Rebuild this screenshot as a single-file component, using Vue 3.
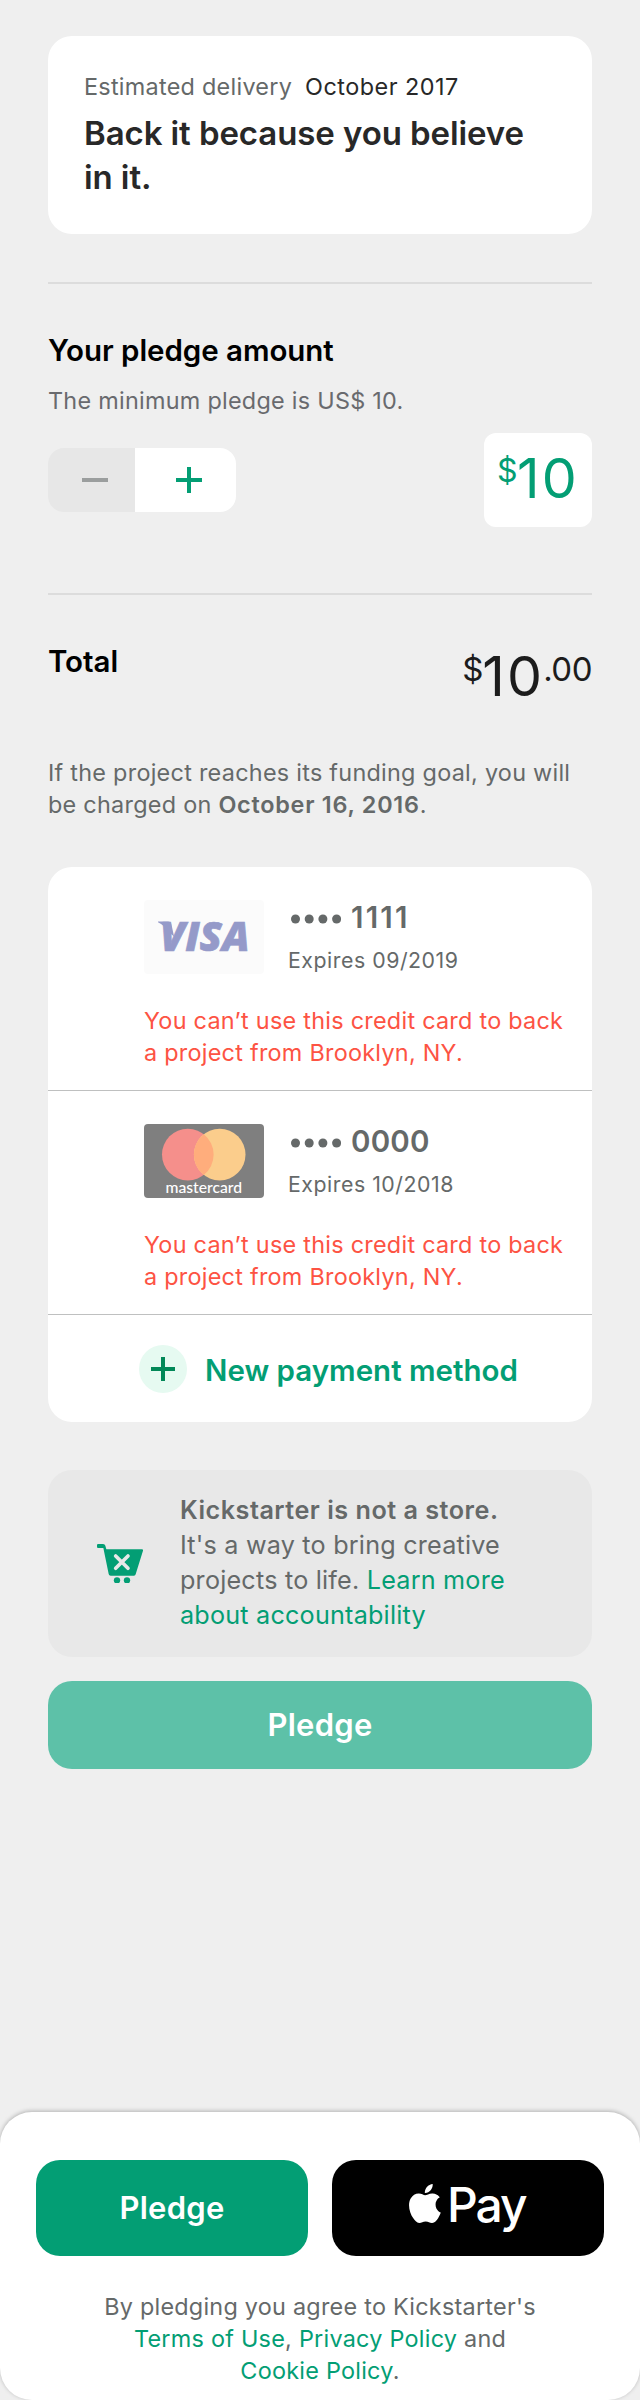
<script setup>
const cards = [
  { brand: 'visa', digits: '1111', expires: '09/2019' },
  { brand: 'mastercard', digits: '0000', expires: '10/2018' }
]
</script>

<template>
  <div class="page">
    <main class="content">
      <section class="reward">
        <p class="body delivery">
          <span class="muted">Estimated delivery</span>
          <span class="date">October 2017</span>
        </p>
        <h1>Back it because you believe<br />in it.</h1>
      </section>

      <hr />

      <section class="amount">
        <h2>Your pledge amount</h2>
        <p class="body minimum">The minimum pledge is US$ 10.</p>
        <div class="amount-row">
          <div class="stepper">
            <button class="minus" aria-label="Decrease">
              <svg width="26" height="26" viewBox="0 0 26 26"><path d="M0 13h26" stroke="#9b9e9e" stroke-width="4" /></svg>
            </button>
            <button class="plus" aria-label="Increase">
              <svg width="26" height="26" viewBox="0 0 26 26"><path d="M0 13h26M13 0v26" stroke="#039e74" stroke-width="4" /></svg>
            </button>
          </div>
          <div class="price-box">
            <span class="currency">$</span><span class="units">10</span>
          </div>
        </div>
      </section>

      <hr class="second" />

      <section class="total">
        <h2>Total</h2>
        <div class="price">
          <span class="currency">$</span><span class="units">10</span><span class="cents">.00</span>
        </div>
      </section>

      <p class="body notice">
        If the project reaches its funding goal, you will<br />be charged on
        <strong>October 16, 2016</strong>.
      </p>

      <section class="methods">
        <div v-for="card in cards" :key="card.digits" class="method">
          <div class="method-head">
            <svg v-if="card.brand === 'visa'" class="logo" viewBox="0 0 120 74">
              <rect width="120" height="74" rx="4" fill="#fbfbfb" />
              <path d="M14 21.500h10q3 0 3.500 3l2.500 12-6-5Q20.500 25.500 14 22.300z" fill="#959ac9" />
              <text x="16" y="51" textLength="89.500" lengthAdjust="spacingAndGlyphs" class="visa-mark">VISA</text>
            </svg>
            <svg v-else class="logo" viewBox="0 0 120 74">
              <rect width="120" height="74" rx="4" fill="#7f7f7f" />
              <circle cx="43.800" cy="30.600" r="25.800" fill="#f58f8b" />
              <circle cx="75.700" cy="30.600" r="25.800" fill="#fbcd8c" />
              <path d="M59.750 10.300a25.800 25.800 0 0 1 0 40.600a25.800 25.800 0 0 1 0-40.600z" fill="#ffad7c" />
              <text x="21.500" y="69" textLength="76.500" lengthAdjust="spacingAndGlyphs" class="mc-mark">mastercard</text>
            </svg>
            <div class="details">
              <div class="number">
                <svg class="dots" width="50" height="10" viewBox="0 0 50 10">
                  <circle v-for="n in 4" :key="n" :cx="n * 13.7 - 9.2" cy="5" r="4.500" fill="#656969" />
                </svg>
                <span :class="['digits', card.brand]">{{ card.digits }}</span>
              </div>
              <div class="expires">Expires {{ card.expires }}</div>
            </div>
          </div>
          <p class="body error">You can’t use this credit card to back<br />a project from Brooklyn, NY.</p>
        </div>
        <div class="new-method">
          <svg width="48" height="48" viewBox="0 0 48 48">
            <circle cx="24" cy="24" r="24" fill="#e6faf1" />
            <path d="M12 24h24M24 12v24" stroke="#028858" stroke-width="4" />
          </svg>
          <span>New payment method</span>
        </div>
      </section>

      <section class="store">
        <svg class="cart" viewBox="51 672 138 118">
          <path d="M54 672h15q6 0 7 5l3 11h107q4 0 3 4L167 763q-1 4-5 4H92q-5 0-6-5L70 684H54q-3 0-3-3v-6q0-3 3-3z" fill="#039e74" />
          <path d="M107 708l37 37M144 708l-37 37" stroke="#e8e8e8" stroke-width="11" stroke-linecap="round" />
          <circle cx="111" cy="781" r="9.500" fill="#039e74" />
          <circle cx="141" cy="781" r="9.500" fill="#039e74" />
        </svg>
        <p>
          <strong>Kickstarter is not a store.</strong><br />It's a way to bring creative<br />projects to
          life. <a>Learn more<br />about accountability</a>
        </p>
      </section>

      <button class="cta disabled">Pledge</button>
    </main>

    <footer>
      <div class="actions">
        <button class="cta">Pledge</button>
        <button class="cta apple" aria-label="Apple Pay">
          <svg width="32" height="39" viewBox="2.200 0 19.700 24">
            <path
              fill="#fff"
              d="M12.152 6.896c-.948 0-2.415-1.078-3.960-1.040-2.040.027-3.910 1.183-4.961 3.014-2.117 3.675-.546 9.103 1.519 12.090 1.013 1.454 2.208 3.090 3.792 3.039 1.520-.065 2.090-.987 3.935-.987 1.831 0 2.350.987 3.960.948 1.637-.026 2.676-1.480 3.676-2.948 1.156-1.688 1.636-3.325 1.662-3.415-.039-.013-3.182-1.221-3.220-4.857-.026-3.040 2.480-4.494 2.597-4.559-1.429-2.090-3.623-2.324-4.390-2.376-2-.156-3.675 1.090-4.610 1.090zM15.530 3.830c.843-1.012 1.400-2.427 1.245-3.830-1.207.052-2.662.805-3.532 1.818-.780.896-1.454 2.338-1.273 3.714 1.338.104 2.715-.688 3.559-1.701"
            />
          </svg>
          <span class="pay">Pay</span>
        </button>
      </div>
      <p class="body terms">
        By pledging you agree to Kickstarter's<br /><a>Terms of Use</a>, <a>Privacy Policy</a> and<br /><a>Cookie Policy</a>.
      </p>
    </footer>
  </div>
</template>

<style>
body {
  background: #efefef;
}
</style>

<style scoped>
.page {
  box-sizing: border-box;
  width: 640px;
  height: 2400px;
  display: flex;
  flex-direction: column;
  background: #efefef;
  color: #656969;
  font-family: Inter, "Liberation Sans", sans-serif;
}
.content {
  padding: 36px 48px 0;
}
h1, h2, p {
  margin: 0;
}
hr {
  height: 2px;
  margin: 48px 0 0;
  border: 0;
  background: #dcdcdc;
}
a {
  color: #039e74;
}
button {
  padding: 0;
  border: 0;
  font-family: inherit;
}
.body {
  font-size: 23.4px;
  line-height: 32px;
  letter-spacing: 0.27px;
}
.reward {
  box-sizing: border-box;
  height: 198px;
  padding: 35px 35px 0 36px;
  border-radius: 24px;
  background: #fff;
  color: #282828;
}
.muted {
  color: #656969;
}
.delivery {
  display: flex;
  gap: 13px;
}
.date {
  letter-spacing: 0.49px;
}
h1 {
  margin-top: 8px;
  font-size: 33px;
  line-height: 44px;
  font-weight: 600;
  letter-spacing: -0.09px;
}
h2 {
  color: #000;
  font-size: 29.5px;
  line-height: 36px;
  font-weight: 600;
  letter-spacing: -0.05px;
}
.amount {
  margin-top: 48px;
}
.minimum {
  margin-top: 17px;
  color: #696a6e;
}
.amount-row {
  display: flex;
  align-items: center;
  justify-content: space-between;
  margin-top: 16px;
}
.stepper {
  display: flex;
  width: 188px;
  height: 64px;
  border-radius: 16px;
  overflow: hidden;
}
.stepper button {
  display: flex;
  align-items: center;
  justify-content: center;
}
.minus {
  width: 87px;
  padding-left: 7px;
  background: #e7e7e7;
}
.plus {
  flex: 1;
  padding-left: 7px;
  background: #fff;
}
.price-box {
  box-sizing: border-box;
  display: flex;
  width: 108px;
  height: 94px;
  padding: 12px 0 0 13px;
  border-radius: 12px;
  background: #fff;
  color: #039e74;
}
.units {
  font-size: 55.5px;
  line-height: 66px;
  letter-spacing: 2.2px;
}
.currency, .cents {
  font-size: 33px;
  line-height: 40px;
}
.currency {
  width: 20px;
  margin-top: 6px;
}
.price-box .currency {
  font-size: 32px;
}
.second {
  margin-top: 66px;
}
.total {
  display: flex;
  justify-content: space-between;
  height: 57px;
  margin-top: 48px;
}
.price {
  display: flex;
  color: #1c1c1c;
}
.cents {
  margin: 6px 0 0 -1px;
  letter-spacing: -0.5px;
}
.notice {
  margin-top: 57px;
}
.notice strong {
  font-weight: 600;
  letter-spacing: 0.75px;
}
.methods {
  height: 555px;
  margin-top: 46px;
  border-radius: 24px;
  background: #fff;
}
.method {
  box-sizing: border-box;
  height: 224px;
  padding: 33px 0 0 96px;
  border-bottom: 1px solid #bfc0c0;
}
.method-head {
  display: flex;
  gap: 24px;
  height: 74px;
}
.logo {
  width: 120px;
  height: 74px;
}
.visa-mark {
  fill: #959ac9;
  stroke: #959ac9;
  stroke-width: 0.7px;
  font: italic 800 41.5px "Open Sans", sans-serif;
}
.mc-mark {
  fill: #fff;
  font: 500 15.5px Lato, sans-serif;
}
.number {
  display: flex;
  align-items: center;
  height: 36px;
  margin-top: -1px;
  padding-left: 3px;
}
.dots {
  margin-top: 4px;
}
.digits {
  margin-left: 10px;
  font-size: 29.5px;
  line-height: 36px;
  font-weight: 600;
  letter-spacing: 0.2px;
}
.digits.visa {
  letter-spacing: 2.2px;
}
.expires {
  margin-top: 11px;
  font-size: 21.3px;
  line-height: 28px;
  letter-spacing: 0.53px;
}
.error {
  margin-top: 31px;
  color: #fd5343;
  letter-spacing: 0.26px;
}
.new-method {
  display: flex;
  align-items: center;
  gap: 18px;
  height: 107px;
  padding-left: 91px;
  color: #039e74;
  font-size: 29.5px;
  font-weight: 600;
  line-height: 36px;
}
.new-method span {
  padding-top: 2px;
}
.store {
  box-sizing: border-box;
  display: flex;
  height: 187px;
  margin-top: 48px;
  padding: 23px 0 0 49px;
  border-radius: 24px;
  background: #e8e8e8;
}
.cart {
  width: 46px;
  height: 39.3px;
  margin: 51px 37px 0 0;
}
.store p {
  font-size: 25.2px;
  line-height: 35px;
  letter-spacing: 0.2px;
}
.store strong {
  font-weight: 600;
  letter-spacing: 0.5px;
}
.cta {
  height: 96px;
  padding-bottom: 1px;
  border-radius: 24px;
  background: #039e74;
  color: #fff;
  font-size: 31px;
  font-weight: 600;
  line-height: 38px;
  letter-spacing: 0.26px;
}
.disabled {
  display: block;
  width: 100%;
  height: 88px;
  margin-top: 24px;
  background: #5dc1a8;
}
footer {
  box-sizing: border-box;
  height: 288px;
  margin-top: auto;
  padding: 48px 36px 0;
  border-radius: 32px;
  background: #fff;
  box-shadow: 0 -1px 4px rgba(0, 0, 0, 0.26);
}
.actions {
  display: grid;
  grid-template-columns: 1fr 1fr;
  gap: 24px;
}
.apple {
  display: flex;
  align-items: flex-start;
  padding: 24px 0 0 77px;
  background: #000;
}
.pay {
  margin: -3px 0 0 6px;
  font-size: 48px;
  line-height: 48px;
  font-weight: 450;
  letter-spacing: -2px;
}
.terms {
  margin-top: 35px;
  text-align: center;
  letter-spacing: 0.25px;
}
</style>
